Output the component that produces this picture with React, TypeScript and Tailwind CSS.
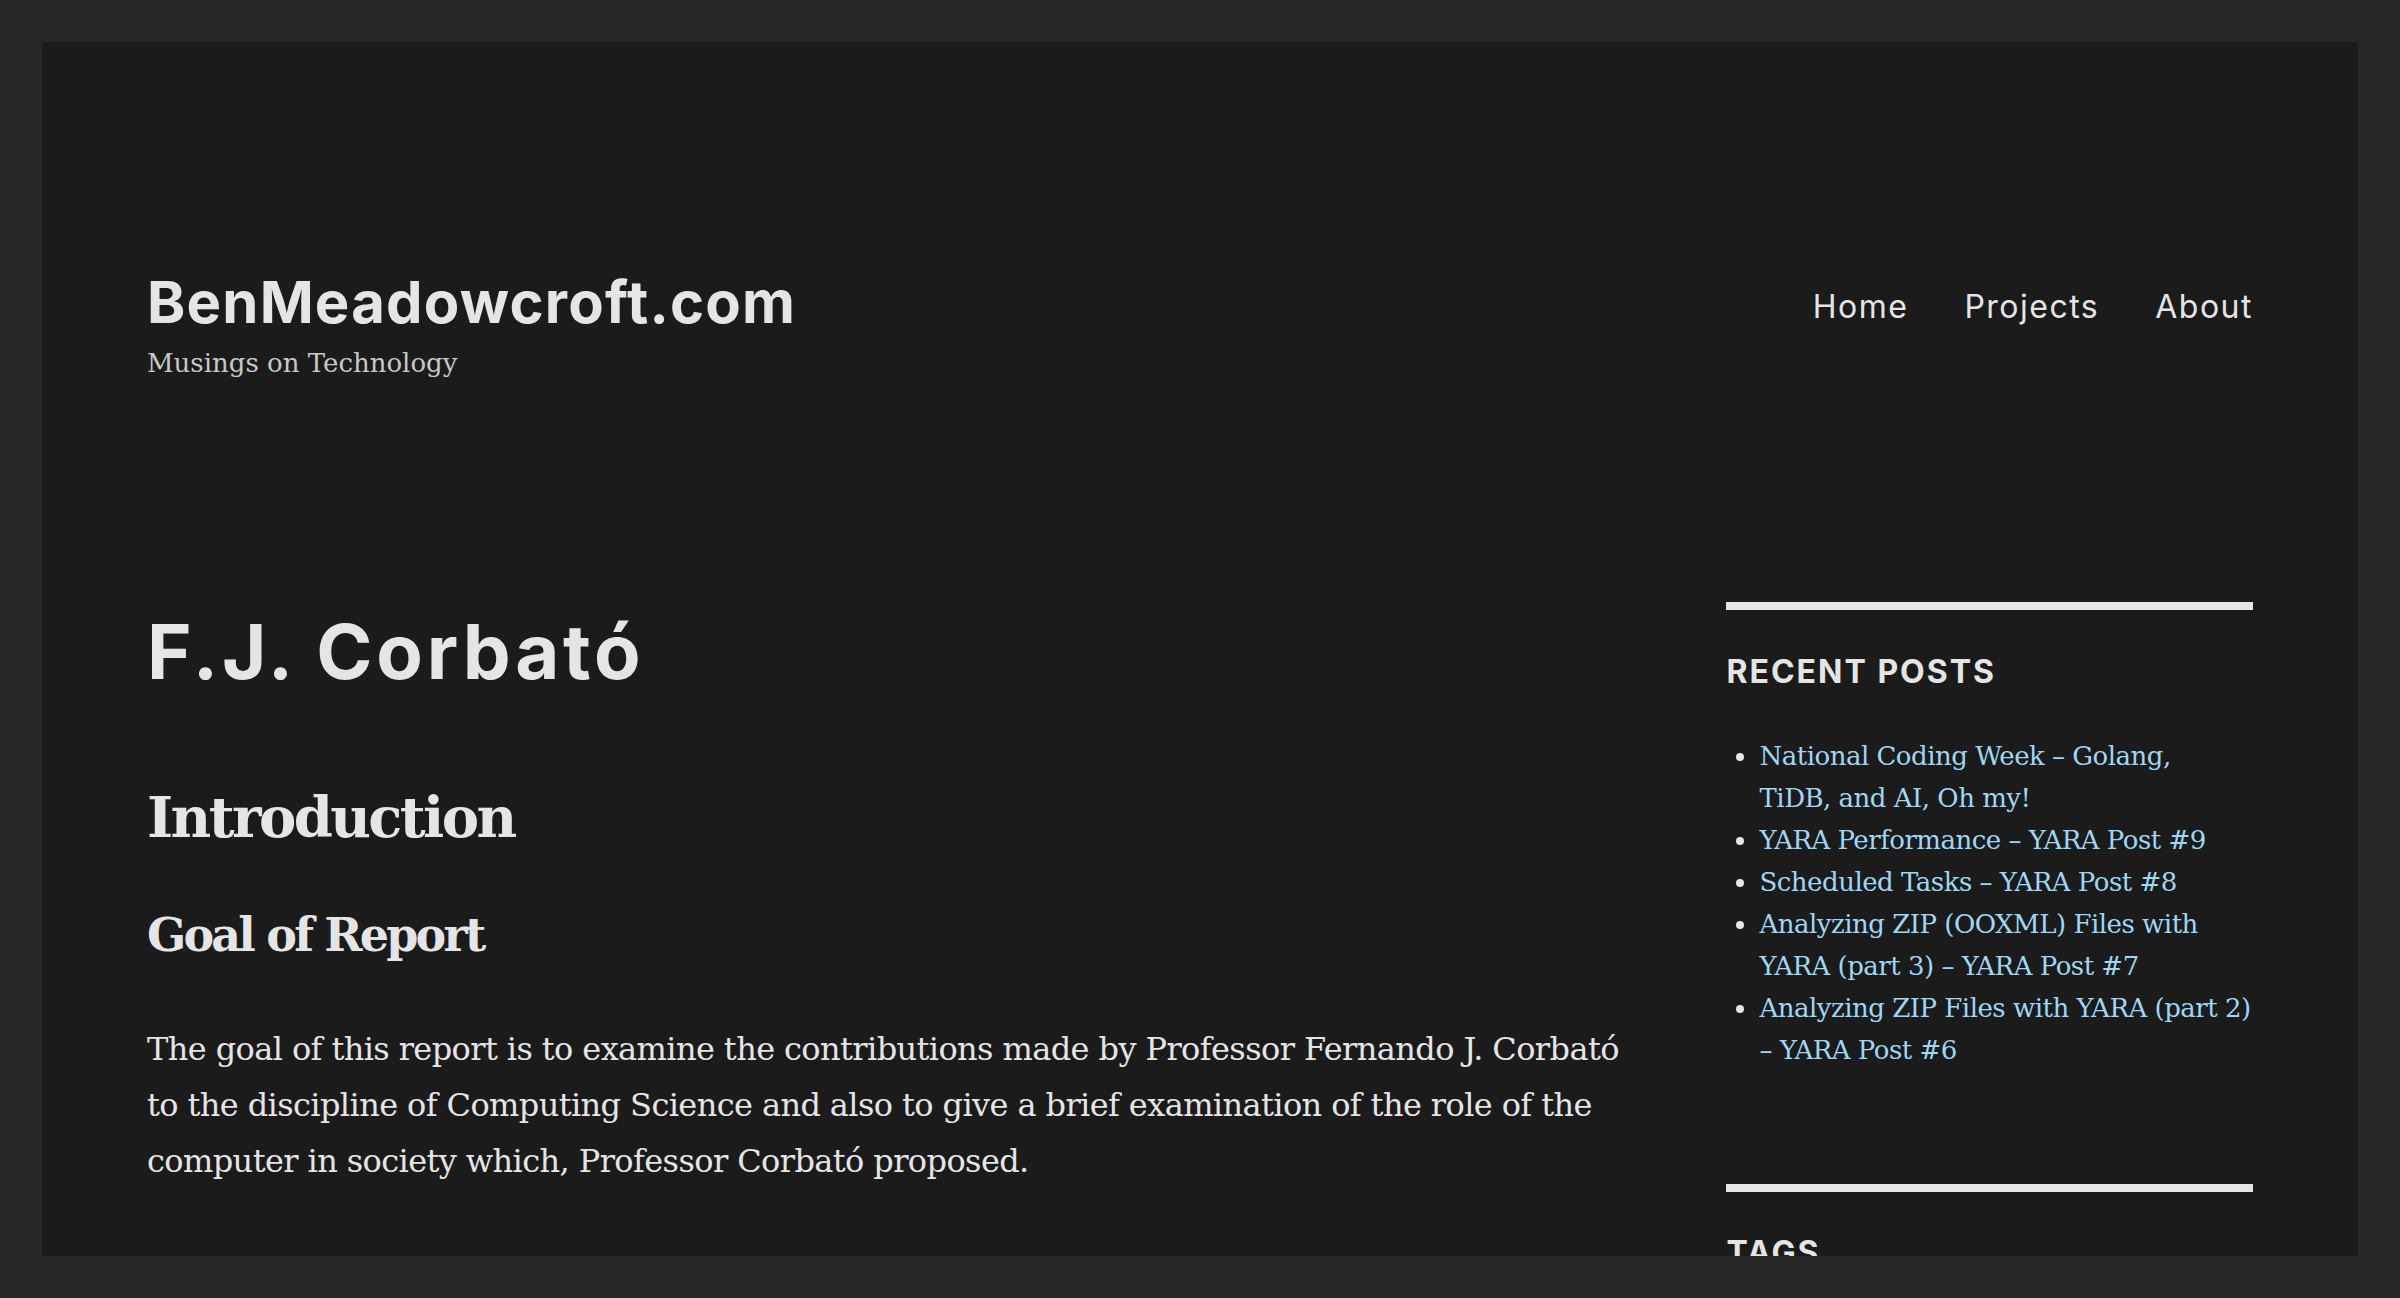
import React from 'react';

const heading = { fontFamily: 'Inter, "DejaVu Sans", sans-serif' };
const serif = { fontFamily: '"DejaVu Serif", "Liberation Serif", serif' };

// each post title split into the lines it shows in the sidebar
const recentPosts = [
  ['National Coding Week – Golang,', 'TiDB, and AI, Oh my!'],
  ['YARA Performance – YARA Post #9'],
  ['Scheduled Tasks – YARA Post #8'],
  ['Analyzing ZIP (OOXML) Files with', 'YARA (part 3) – YARA Post #7'],
  ['Analyzing ZIP Files with YARA (part 2)', '– YARA Post #6'],
];

const App: React.FC = () => {
  return (
    <div className="h-screen overflow-hidden bg-[#262626] p-[42px]">
      <div className="h-full overflow-hidden bg-[#1b1b1b] px-[105px] text-[#e5e5e5]">
        {/* Header */}
        <header className="flex items-start justify-between pt-[224px]">
          <div>
            <div className="text-[58px] font-bold leading-[72px] tracking-[1.2px]" style={heading}>
              BenMeadowcroft.com
            </div>
            <div className="mt-[4px] text-[26px] leading-[42px] text-[#c8c8c8]" style={serif}>
              Musings on Technology
            </div>
          </div>
          <nav className="mt-[21px] flex gap-[56px] text-[32px] leading-[40px] tracking-[1.5px]" style={heading}>
            <a>Home</a>
            <a>Projects</a>
            <a>About</a>
          </nav>
        </header>

        {/* Content + sidebar */}
        <div className="mt-[218px] flex">
          <main className="w-[70%] pt-[5px]">
            <h1 className="text-[76px] font-bold leading-[88px] tracking-[3.8px]" style={heading}>
              F.J. Corbató
            </h1>
            <h2 className="mt-[87px] text-[56px] font-bold leading-[70px] tracking-[-2.6px]" style={serif}>
              Introduction
            </h2>
            <h3 className="mt-[55px] text-[46px] font-bold leading-[57px] tracking-[-2.8px]" style={serif}>
              Goal of Report
            </h3>
            <p className="mt-[57px] text-[32px] leading-[56px] tracking-[-0.6px]" style={serif}>
              The goal of this report is to examine the contributions made by Professor Fernando J. Corbató
              to the discipline of Computing Science and also to give a brief examination of the role of the
              computer in society which, Professor Corbató proposed.
            </p>
          </main>

          <aside className="ml-[5%] w-[25%]">
            <section className="border-t-[8px] border-[#e5e5e5]">
              <h2 className="mt-[42px] text-[32px] font-bold uppercase leading-[40px] tracking-[2px]" style={heading}>
                Recent Posts
              </h2>
              <ul className="mt-[43px] ml-[33px] list-disc text-[26px] leading-[42px] tracking-[-0.5px] marker:text-[#e5e5e5]" style={serif}>
                {recentPosts.map((lines) => (
                  <li key={lines[0]}>
                    <a className="text-[#9fd7f5]">
                      {lines.map((line) => (
                        <span key={line} className="block whitespace-nowrap">
                          {line}
                        </span>
                      ))}
                    </a>
                  </li>
                ))}
              </ul>
            </section>
            <section className="mt-[113px] border-t-[8px] border-[#e5e5e5]">
              <h2 className="mt-[41px] text-[32px] font-bold uppercase leading-[40px] tracking-[2px]" style={heading}>
                Tags
              </h2>
            </section>
          </aside>
        </div>
      </div>
    </div>
  );
};

export default App;
